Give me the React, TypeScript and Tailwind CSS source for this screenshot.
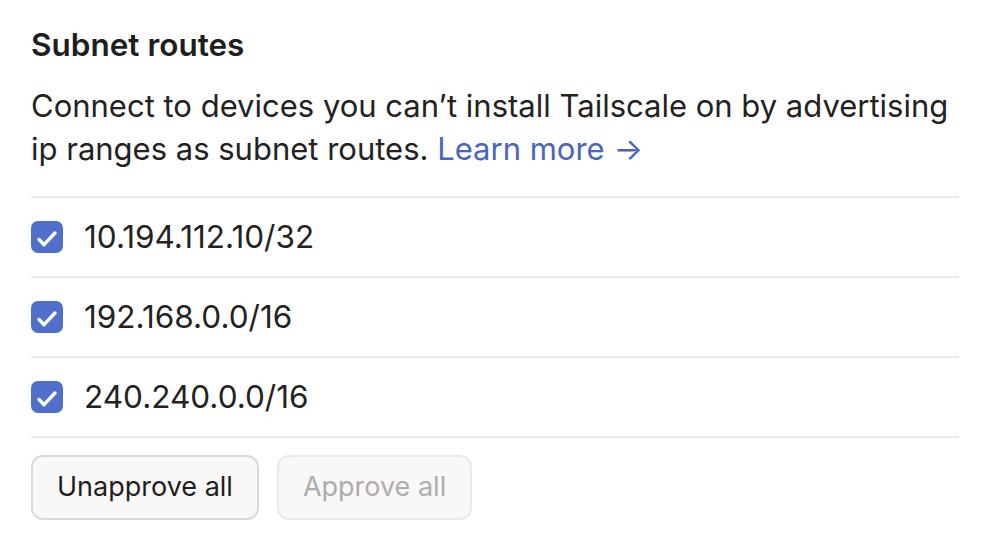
import React from "react";

const routes = ["10.194.112.10/32", "192.168.0.0/16", "240.240.0.0/16"];

function Check() {
  return (
    <div className="w-[32px] h-[32px] rounded-[7px] bg-[#4f6fcb] shrink-0">
      <svg width="32" height="32" viewBox="0 0 32 32" fill="none">
        <path d="M8 18.5l5 5.2 11-11.7" stroke="white" strokeWidth="3.4" strokeLinecap="round" strokeLinejoin="round" />
      </svg>
    </div>
  );
}

export default function App() {
  return (
    <div className="w-[992px] h-[544px] bg-white px-[31px] pt-[25px] text-[#1f1e1e]" style={{ fontFamily: "Inter, 'Noto Sans', sans-serif" }}>
      <h2 className="text-[31.5px] font-semibold leading-[40px]">Subnet routes</h2>
      <p className="text-[31px] leading-[43px] mt-[19px] text-[#24221f] w-[927px]">
        Connect to devices you can’t install Tailscale on by advertising ip ranges as subnet routes.{" "}
        <span className="text-[#4a66bb]">Learn more →</span>
      </p>
      <div className="mt-[26px] w-[928px] border-t-2 border-[#ebebeb]">
        {routes.map((r) => (
          <div key={r} className="h-[80px] border-b-2 border-[#ebebeb] flex items-center gap-[21px]">
            <Check />
            <span className="text-[31.5px] text-[#24221f]">{r}</span>
          </div>
        ))}
      </div>
      <div className="flex gap-[18px] mt-[17px]">
        <button className="h-[65px] px-[24px] rounded-[12px] border-2 border-[#dcdad8] bg-[#f9f8f7] text-[27px] text-[#1f1e1e]">
          Unapprove all
        </button>
        <button className="h-[65px] px-[24px] rounded-[12px] border-2 border-[#ebe9e7] bg-[#f9f8f7] text-[27px] text-[#aeacaa]">
          Approve all
        </button>
      </div>
    </div>
  );
}
